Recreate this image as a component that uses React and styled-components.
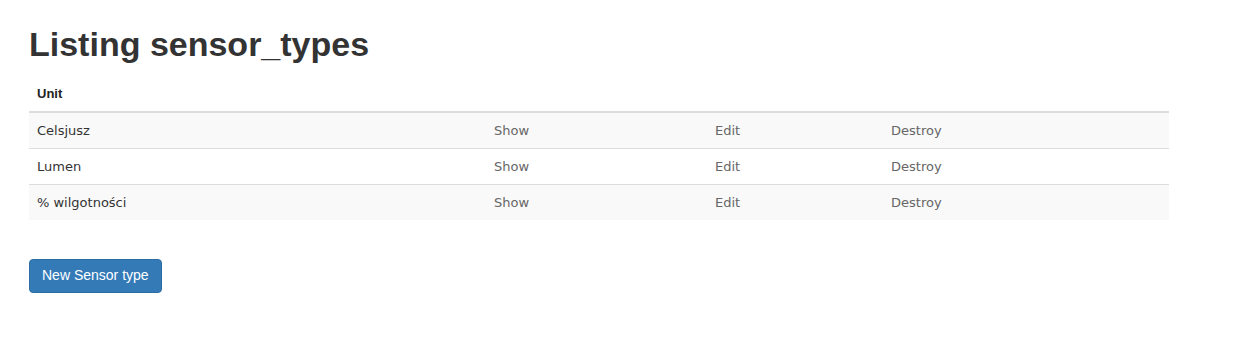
import React from "react";
import styled, { createGlobalStyle } from "styled-components";

const Global = createGlobalStyle`
  html, body { margin: 0; padding: 0; background: #fff; }
  body { font-family: "Liberation Sans", Arial, sans-serif; color: #333; }
`;

const Page = styled.div`
  padding: 26px 29px 40px 29px;
`;

const Title = styled.h1`
  margin: 0 0 13px 0;
  font-family: "Liberation Sans", Arial, sans-serif;
  font-size: 34px;
  font-weight: 700;
  line-height: 1.1;
  color: #333;
`;

const Table = styled.table`
  width: 1140px;
  border-collapse: collapse;
  border-spacing: 0;
  table-layout: fixed;
  margin-bottom: 20px;
  font-family: "DejaVu Sans", Verdana, sans-serif;
  font-size: 13px;
  line-height: 19px;
`;

const HeadCell = styled.th`
  padding: 8px;
  text-align: left;
  font-family: "Liberation Sans", Arial, sans-serif;
  font-weight: 700;
  font-size: 13px;
  color: #222;
  border-bottom: 2px solid #ddd;
`;

const Row = styled.tr`
  background: ${(p) => (p.$striped ? "#f9f9f9" : "#fff")};
`;

const Cell = styled.td`
  padding: 8px;
  border-top: 1px solid #ddd;
  color: #333;
  vertical-align: top;
`;

const Link = styled.a`
  color: #666;
  text-decoration: none;
`;

const Actions = styled.div`
  padding-top: 19px;
`;

const Button = styled.a`
  display: inline-block;
  padding: 6px 12px;
  font-family: "Liberation Sans", Arial, sans-serif;
  font-size: 14px;
  line-height: 1.42857;
  color: #fff;
  background: #337ab7;
  border: 1px solid #2e6da4;
  border-radius: 4px;
  text-decoration: none;
`;

const rows = ["Celsjusz", "Lumen", "% wilgotności"];

export default function App() {
  return (
    <Page>
      <Global />
      <Title>Listing sensor_types</Title>
      <Table>
        <colgroup>
          <col style={{ width: 457 }} />
          <col style={{ width: 221 }} />
          <col style={{ width: 176 }} />
          <col style={{ width: 286 }} />
        </colgroup>
        <thead>
          <tr>
            <HeadCell>Unit</HeadCell>
            <HeadCell colSpan={3}></HeadCell>
          </tr>
        </thead>
        <tbody>
          {rows.map((r, i) => (
            <Row key={r} $striped={i % 2 === 0}>
              <Cell>{r}</Cell>
              <Cell><Link href="#">Show</Link></Cell>
              <Cell><Link href="#">Edit</Link></Cell>
              <Cell><Link href="#">Destroy</Link></Cell>
            </Row>
          ))}
        </tbody>
      </Table>
      <Actions>
        <Button href="#">New Sensor type</Button>
      </Actions>
    </Page>
  );
}
